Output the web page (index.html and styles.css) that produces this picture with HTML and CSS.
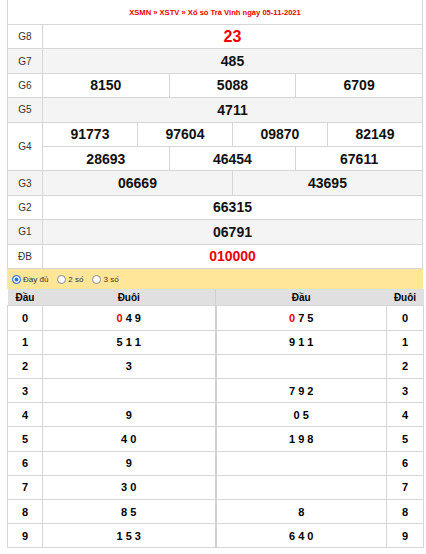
FILE: index.html
```html
<!DOCTYPE html>
<html lang="vi">
<head>
<meta charset="utf-8">
<title>XSTV 05-11-2021</title>
<link rel="stylesheet" href="styles.css">
</head>
<body>
<div class="wrap">
  <table class="kq">
    <colgroup><col class="c-lbl"><col span="12"></colgroup>
    <tr class="title"><td colspan="13">XSMN » XSTV » Xổ số Trà Vinh ngày 05-11-2021</td></tr>
    <tr><td class="lbl">G8</td><td colspan="12" class="num g8">23</td></tr>
    <tr class="alt"><td class="lbl">G7</td><td colspan="12" class="num">485</td></tr>
    <tr><td class="lbl">G6</td><td colspan="4" class="num">8150</td><td colspan="4" class="num">5088</td><td colspan="4" class="num">6709</td></tr>
    <tr class="alt"><td class="lbl">G5</td><td colspan="12" class="num">4711</td></tr>
    <tr><td class="lbl" rowspan="2">G4</td><td colspan="3" class="num">91773</td><td colspan="3" class="num">97604</td><td colspan="3" class="num">09870</td><td colspan="3" class="num">82149</td></tr>
    <tr><td colspan="4" class="num">28693</td><td colspan="4" class="num">46454</td><td colspan="4" class="num">67611</td></tr>
    <tr class="alt"><td class="lbl">G3</td><td colspan="6" class="num">06669</td><td colspan="6" class="num">43695</td></tr>
    <tr><td class="lbl">G2</td><td colspan="12" class="num">66315</td></tr>
    <tr class="alt"><td class="lbl">G1</td><td colspan="12" class="num">06791</td></tr>
    <tr><td class="lbl">ĐB</td><td colspan="12" class="num db">010000</td></tr>
  </table>
  <div class="opts">
    <label class="opt"><span class="radio on"></span>Đầy đủ</label>
    <label class="opt"><span class="radio"></span>2 số</label>
    <label class="opt"><span class="radio"></span>3 số</label>
  </div>
  <table class="loto">
    <colgroup><col class="l1"><col class="l2"><col class="l3"><col class="l4"></colgroup>
    <thead>
      <tr><th>Đầu</th><th class="mid">Đuôi</th><th>Đầu</th><th>Đuôi</th></tr>
    </thead>
    <tbody>
      <tr><td>0</td><td class="mid"><span class="red">0</span> 4 9</td><td><span class="red">0</span> 7 5</td><td>0</td></tr>
      <tr><td>1</td><td class="mid">5 1 1</td><td>9 1 1</td><td>1</td></tr>
      <tr><td>2</td><td class="mid">3</td><td></td><td>2</td></tr>
      <tr><td>3</td><td class="mid"></td><td>7 9 2</td><td>3</td></tr>
      <tr><td>4</td><td class="mid">9</td><td>0 5</td><td>4</td></tr>
      <tr><td>5</td><td class="mid">4 0</td><td>1 9 8</td><td>5</td></tr>
      <tr><td>6</td><td class="mid">9</td><td></td><td>6</td></tr>
      <tr><td>7</td><td class="mid">3 0</td><td></td><td>7</td></tr>
      <tr><td>8</td><td class="mid">8 5</td><td>8</td><td>8</td></tr>
      <tr><td>9</td><td class="mid">1 5 3</td><td>6 4 0</td><td>9</td></tr>
    </tbody>
  </table>
</div>
</body>
</html>
```

FILE: styles.css
```css
body {
  margin: 0;
  background: #fff;
  font-family: "Liberation Sans", Arial, sans-serif;
  color: #000;
}
.wrap {
  width: 416px;
  margin-left: 7px;
}
table {
  border-collapse: collapse;
  table-layout: fixed;
  width: 416px;
}
.c-lbl { width: 35px; }
.kq td {
  border: 1px solid #d6d6d6;
  text-align: center;
  vertical-align: middle;
  padding: 0;
  height: 23.4px;
}
.kq .title td {
  border-top: none;
  color: #e00;
  font-weight: bold;
  font-size: 7.6px;
  height: 24px;
}
.lbl {
  font-size: 10px;
  color: #333;
}
.num {
  font-weight: bold;
  font-size: 14px;
  color: #111;
}
.num.g8 { font-size: 16px; color: #e00; }
.num.db { color: #e00; }
.alt td { background: #f4f4f4; }

.opts {
  background: #ffe699;
  height: 20.5px;
  display: flex;
  align-items: center;
  padding-left: 5px;
  font-size: 8px;
  color: #333;
}
.opt {
  display: flex;
  align-items: center;
  gap: 2px;
  margin-right: 9px;
}
.radio {
  width: 9px;
  height: 9px;
  box-sizing: border-box;
  border: 1px solid #888;
  border-radius: 50%;
  background: #fff;
}
.radio.on {
  border-color: #1a73e8;
  background: #1a73e8;
  box-shadow: inset 0 0 0 1.5px #fff;
}

.l1 { width: 35px; }
.l2 { width: 173px; }
.l3 { width: 171px; }
.l4 { width: 37px; }
.loto th {
  background: #e0e0e0;
  font-size: 10px;
  font-weight: bold;
  height: 16px;
  padding: 0;
  border: none;
}
.loto th.mid { border-right: 1px solid #cfcfcf; }
.loto td {
  border: 1px solid #d6d6d6;
  height: 23.2px;
  padding: 0;
  text-align: center;
  font-size: 11px;
  font-weight: bold;
}
.loto td.mid { border-right: 2px solid #d0d0d0; }
.red { color: #e00; }
```
